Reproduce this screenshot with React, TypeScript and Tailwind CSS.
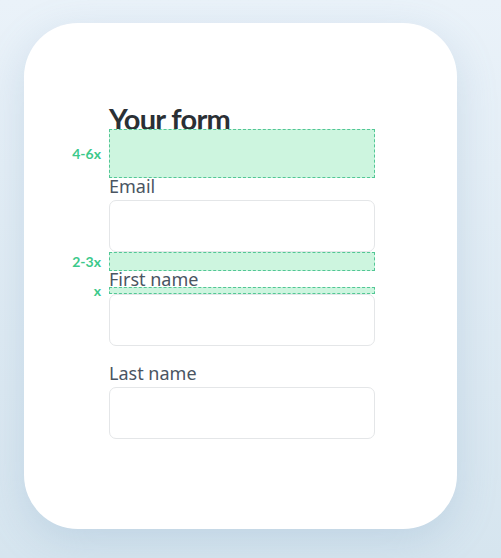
import type { ReactNode } from "react";

const LABEL = "block text-[18px] leading-[16px] text-[#4a5562] font-['Noto_Sans',sans-serif]";
const INPUT = "block h-[52px] w-full rounded-[7px] border border-[#e4e6e8] bg-white";
const BADGE = "absolute right-full top-1/2 mr-[9px] -translate-y-1/2 whitespace-nowrap text-[14px] font-bold leading-none text-[#3cc98b] font-['Lato',sans-serif]";

// Dashed green block showing a spacing token between form parts.
function Spacer({ label, h }: { label: string; h: string }) {
  return (
    <div className={`relative w-full border border-dashed border-[#52c795] bg-[#cdf5df] ${h}`}>
      <span className={BADGE}>{label}</span>
    </div>
  );
}

function Field({ label, children }: { label: string; children?: ReactNode }) {
  return (
    <div className="flex flex-col">
      <label className={LABEL}>{label}</label>
      {children ?? <div className="h-[6px]" />}
      <input className={INPUT} />
    </div>
  );
}

export default function App() {
  return (
    <div className="h-[558px] w-full bg-gradient-to-b from-[#eaf2f9] to-[#d6e5ef] pl-[24px] pt-[23px]">
      <div className="flex h-[506px] w-[433px] flex-col rounded-[54px] bg-white pl-[85px] pt-[86px] shadow-[0_12px_40px_rgba(110,150,185,0.22)]">
        <div className="flex w-[266px] flex-col">
          <h1 className="text-[29px] leading-[20px] font-bold tracking-tight text-[#2b3035] font-['Lato',sans-serif]">
            Your form
          </h1>
          <Spacer label="4-6x" h="h-[49px]" />
          <Field label="Email" />
          <Spacer label="2-3x" h="h-[19px]" />
          <Field label="First name">
            <Spacer label="x" h="h-[7px]" />
          </Field>
          <div className="h-[19px]" />
          <Field label="Last name" />
        </div>
      </div>
    </div>
  );
}
